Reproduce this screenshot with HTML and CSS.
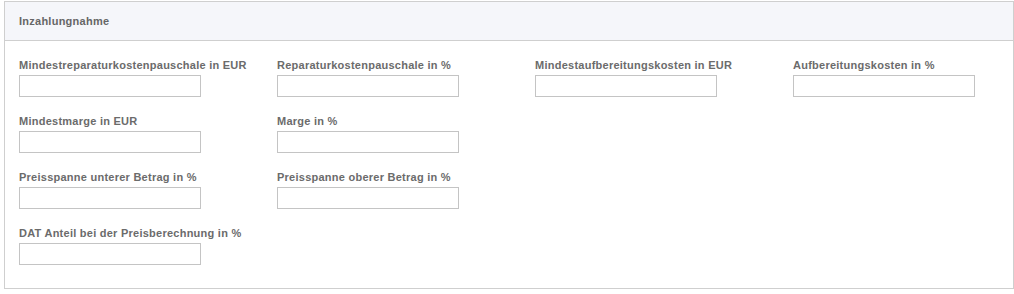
FILE: index.html
```html
<!DOCTYPE html>
<html lang="de">
<head>
    <meta charset="UTF-8">
    <title>Inzahlungnahme</title>
    <link rel="stylesheet" href="styles.css">
</head>
<body>
    <div class="panel">
        <div class="panel-heading">Inzahlungnahme</div>
        <div class="panel-body">
            <div class="form-row">
                <div class="field">
                    <label>Mindestreparaturkostenpauschale in EUR</label>
                    <input type="text">
                </div>
                <div class="field">
                    <label>Reparaturkostenpauschale in %</label>
                    <input type="text">
                </div>
                <div class="field">
                    <label>Mindestaufbereitungskosten in EUR</label>
                    <input type="text">
                </div>
                <div class="field">
                    <label>Aufbereitungskosten in %</label>
                    <input type="text">
                </div>
            </div>
            <div class="form-row">
                <div class="field">
                    <label>Mindestmarge in EUR</label>
                    <input type="text">
                </div>
                <div class="field">
                    <label>Marge in %</label>
                    <input type="text">
                </div>
            </div>
            <div class="form-row">
                <div class="field">
                    <label>Preisspanne unterer Betrag in %</label>
                    <input type="text">
                </div>
                <div class="field">
                    <label>Preisspanne oberer Betrag in %</label>
                    <input type="text">
                </div>
            </div>
            <div class="form-row">
                <div class="field">
                    <label>DAT Anteil bei der Preisberechnung in %</label>
                    <input type="text">
                </div>
            </div>
        </div>
    </div>
</body>
</html>
```

FILE: styles.css
```css
body {
    margin: 1px 0 0 4px;
    font-family: "Liberation Sans", Arial, sans-serif;
    background: #fff;
}
.panel {
    width: 1008px;
    border: 1px solid #cfcfcf;
    background: #fff;
}
.panel-heading {
    height: 38px;
    line-height: 38px;
    padding: 0 14px;
    background: #f5f6fa;
    border-bottom: 1px solid #cfcfcf;
    font-size: 11px;
    font-weight: bold;
    letter-spacing: 0.25px;
    color: #666;
}
.panel-body {
    padding: 17px 14px 23px;
    display: flex;
    flex-direction: column;
    gap: 17px;
}
.form-row {
    display: flex;
}
.field {
    flex: 0 0 258px;
    display: flex;
    flex-direction: column;
}
.field label {
    font-size: 11px;
    line-height: 14px;
    font-weight: bold;
    letter-spacing: 0.25px;
    color: #6b6b6b;
    margin-bottom: 3px;
    white-space: nowrap;
}
.field input {
    box-sizing: border-box;
    width: 182px;
    height: 22px;
    margin: 0;
    border: 1px solid #c4c4c4;
    border-radius: 0;
    background: #fff;
    padding: 2px 4px;
}
```
